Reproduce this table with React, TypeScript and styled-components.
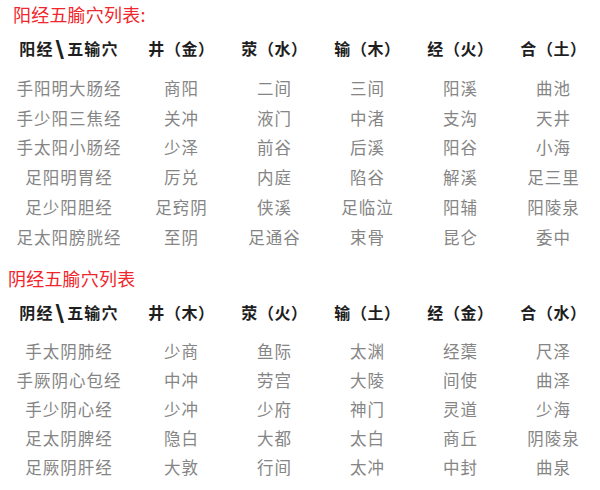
import React from "react"
import styled, { createGlobalStyle } from "styled-components"

const GlobalStyle = createGlobalStyle`
  html, body {
    margin: 0;
    padding: 0;
    background: #ffffff;
  }
  body {
    font-family: "Noto Sans CJK SC", "Noto Sans", sans-serif;
  }
`

const components = {
  Page: styled.div`
    width: 600px;
    padding-left: 3px;
    box-sizing: border-box;
  `,
  Section: styled.section<{ $gapTop: number }>`
    margin-top: ${p => p.$gapTop}px;
  `,
  Title: styled.div<{ $indent: number }>`
    height: 28px;
    line-height: 28px;
    padding-left: ${p => p.$indent}px;
    color: #f0262c;
    font-size: 18px;
    letter-spacing: 0.2px;
  `,
  Row: styled.div<{ $h: number }>`
    display: grid;
    grid-template-columns: 132px repeat(5, 93px);
    height: ${p => p.$h}px;
    align-items: center;
  `,
  HeadCell: styled.div<{ $corner?: boolean }>`
    text-align: center;
    color: #1e1e1e;
    font-weight: 700;
    font-size: 16px;
    letter-spacing: ${p => (p.$corner ? "1.2px" : "0.6px")};
  `,
  Slash: styled.span`
    display: inline-block;
    font-weight: 900;
    font-size: 19px;
    line-height: 1;
    margin: 0 3px 0 2px;
    transform: scaleX(1.3);
  `,
  Cell: styled.div`
    text-align: center;
    color: #858585;
    font-size: 16.5px;
    letter-spacing: 1px;
  `,
  Body: styled.div<{ $top: number }>`
    padding-top: ${p => p.$top}px;
  `
}

type Table = {
  title: string
  indent: number
  gapTop: number
  headHeight: number
  bodyTop: number
  rowHeight: number
  corner: [string, string]
  head: string[]
  rows: string[][]
}

const tables: Table[] = [
  {
    title: "阳经五腧穴列表:",
    indent: 10,
    gapTop: 0,
    headHeight: 40,
    bodyTop: 5,
    rowHeight: 29.8,
    corner: ["阳经", "五输穴"],
    head: ["井（金）", "荥（水）", "输（木）", "经（火）", "合（土）"],
    rows: [
      ["手阳明大肠经", "商阳", "二间", "三间", "阳溪", "曲池"],
      ["手少阳三焦经", "关冲", "液门", "中渚", "支沟", "天井"],
      ["手太阳小肠经", "少泽", "前谷", "后溪", "阳谷", "小海"],
      ["足阳明胃经", "厉兑", "内庭", "陷谷", "解溪", "足三里"],
      ["足少阳胆经", "足窍阴", "侠溪", "足临泣", "阳辅", "阳陵泉"],
      ["足太阳膀胱经", "至阴", "足通谷", "束骨", "昆仑", "委中"]
    ]
  },
  {
    title: "阴经五腧穴列表",
    indent: 5,
    gapTop: 12,
    headHeight: 40,
    bodyTop: 5,
    rowHeight: 29,
    corner: ["阴经", "五输穴"],
    head: ["井（木）", "荥（火）", "输（土）", "经（金）", "合（水）"],
    rows: [
      ["手太阴肺经", "少商", "鱼际", "太渊", "经蕖", "尺泽"],
      ["手厥阴心包经", "中冲", "劳宫", "大陵", "间使", "曲泽"],
      ["手少阴心经", "少冲", "少府", "神门", "灵道", "少海"],
      ["足太阴脾经", "隐白", "大都", "太白", "商丘", "阴陵泉"],
      ["足厥阴肝经", "大敦", "行间", "太冲", "中封", "曲泉"]
    ]
  }
]

export default function App() {
  return (
    <>
      <GlobalStyle />
      <components.Page>
        {tables.map(t => (
          <components.Section key={t.title} $gapTop={t.gapTop}>
            <components.Title $indent={t.indent}>{t.title}</components.Title>
            <components.Row $h={t.headHeight}>
              <components.HeadCell $corner>
                {t.corner[0]}
                <components.Slash>\</components.Slash>
                {t.corner[1]}
              </components.HeadCell>
              {t.head.map(h => (
                <components.HeadCell key={h}>{h}</components.HeadCell>
              ))}
            </components.Row>
            <components.Body $top={t.bodyTop}>
              {t.rows.map(r => (
                <components.Row key={r[0]} $h={t.rowHeight}>
                  {r.map((c, i) => (
                    <components.Cell key={i}>{c}</components.Cell>
                  ))}
                </components.Row>
              ))}
            </components.Body>
          </components.Section>
        ))}
      </components.Page>
    </>
  )
}
